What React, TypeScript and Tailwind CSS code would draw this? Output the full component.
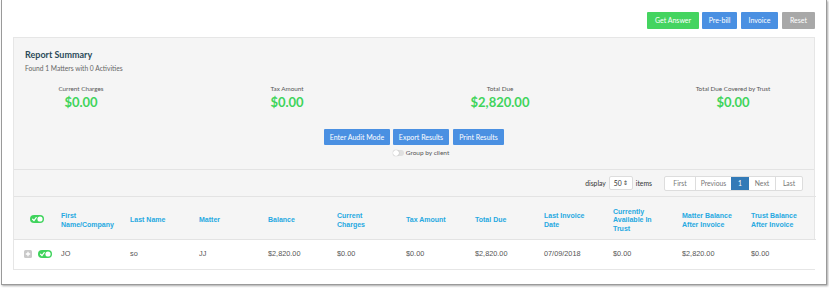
import React from 'react'

const lato = { fontFamily: 'Lato, "Liberation Sans", sans-serif' }

function Toggle() {
  return (
    <svg width="14" height="8" viewBox="0 0 14 8">
      <rect x="0" y="0" width="14" height="8" rx="4" fill="#3fd35c" />
      <path d="M2.6 4.2 L4 5.5 L6.2 2.6" stroke="#fff" strokeWidth="1.2" fill="none" strokeLinecap="round" />
      <circle cx="10" cy="4" r="2.6" fill="#fff" />
    </svg>
  )
}

function PlusBox() {
  return (
    <svg width="8" height="8" viewBox="0 0 8 8">
      <rect x="0" y="0" width="8" height="8" rx="1.5" fill="#c9c9c9" />
      <path d="M4 1.8 V6.2 M1.8 4 H6.2" stroke="#fff" strokeWidth="1.3" />
    </svg>
  )
}

const headerLines: string[][] = [
  ['First', 'Name/Company'],
  ['Last Name'],
  ['Matter'],
  ['Balance'],
  ['Current', 'Charges'],
  ['Tax Amount'],
  ['Total Due'],
  ['Last Invoice', 'Date'],
  ['Currently', 'Available In', 'Trust'],
  ['Matter Balance', 'After Invoice'],
  ['Trust Balance', 'After Invoice'],
]

const row = ['JO', 'so', 'JJ', '$2,820.00', '$0.00', '$0.00', '$2,820.00', '07/09/2018', '$0.00', '$2,820.00', '$0.00']

const summary = [
  { label: 'Current Charges', value: '$0.00', cls: 'w-[112px]' },
  { label: 'Tax Amount', value: '$0.00', cls: 'w-[300px]' },
  { label: 'Total Due', value: '$2,820.00', cls: 'w-[126px]' },
  { label: 'Total Due Covered by Trust', value: '$0.00', cls: 'w-[140px] ml-[100px]' },
]

export default function App() {
  return (
    <div className="w-[829px] h-[288px] bg-white overflow-hidden">
      <div className="ml-[1px] w-[826px] h-[285px] border-l border-r border-b border-[#9a9a9a] shadow-[1px_1px_2px_rgba(0,0,0,0.35)] bg-white px-[11px] pt-[12px]" style={lato}>
        <div className="flex justify-end gap-[3px]">
          <button className="w-[52px] h-[17px] bg-[#44d460] text-white text-[7px] rounded-[1px]">Get Answer</button>
          <button className="w-[35px] h-[17px] bg-[#4a90e2] text-white text-[7px] rounded-[1px]">Pre-bill</button>
          <button className="w-[37px] h-[17px] bg-[#4a90e2] text-white text-[7px] rounded-[1px] ml-[1px]">Invoice</button>
          <button className="w-[33px] h-[17px] bg-[#a8a8a8] text-white text-[7px] rounded-[1px] ml-[1px]">Reset</button>
        </div>

        <div className="mt-[8px] w-[802px] bg-[#f5f5f5] border border-[#e6e6e6]">
          <div className="px-[11px] pt-[10px]">
            <div className="text-[9px] leading-[14px] font-bold text-[#2b4a59]">Report Summary</div>
            <div className="text-[6.7px] leading-[10px] text-[#666] mt-[1px]">Found 1 Matters with 0 Activities</div>

            <div className="flex mt-[11px]">
              {summary.map((s) => (
                <div key={s.label} className={`${s.cls} text-center`}>
                  <div className="text-[6.3px] leading-[10px] text-[#555]">{s.label}</div>
                  <div className="text-[13px] leading-[17px] font-bold text-[#3fd45b]">{s.value}</div>
                </div>
              ))}
            </div>

            <div className="flex justify-center gap-[3px] mt-[18px]">
              <button className="w-[66px] h-[16px] bg-[#4a90e2] text-white text-[7px] rounded-[1px]">Enter Audit Mode</button>
              <button className="w-[56px] h-[16px] bg-[#4a90e2] text-white text-[7px] rounded-[1px]">Export Results</button>
              <button className="w-[51px] h-[16px] bg-[#4a90e2] text-white text-[7px] rounded-[1px] ml-[1px]">Print Results</button>
            </div>
            <div className="flex justify-center items-center gap-[2px] mt-[3px] h-[10px] pl-[14px]">
              <span className="w-[11px] h-[6px] rounded-full bg-[#e0e0e0] flex items-center">
                <span className="w-[6px] h-[6px] rounded-full bg-white shadow-[0_0_1px_rgba(0,0,0,0.4)]" />
              </span>
              <span className="text-[6.5px] text-[#555]">Group by client</span>
            </div>
            <div className="h-[11px]" />
          </div>

          <div className="border-t border-[#e3e3e3] h-[27px] flex items-center justify-end pr-[11px]">
            <span className="text-[6.8px] text-[#333]">display</span>
            <span className="ml-[3px] w-[24px] h-[14px] bg-white border border-[#ddd] rounded-[2px] flex items-center justify-between px-[4px] text-[6.8px] text-[#333]">
              50<span className="text-[6px] leading-none">⇕</span>
            </span>
            <span className="ml-[3px] text-[6.8px] text-[#333]">items</span>
            <div className="ml-[12px] flex h-[15px] text-[6.8px] text-[#777] bg-white border border-[#ddd] rounded-[2px]">
              <span className="w-[31px] flex items-center justify-center border-r border-[#ddd]">First</span>
              <span className="w-[35px] flex items-center justify-center">Previous</span>
              <span className="w-[18px] flex items-center justify-center bg-[#337ab7] text-white">1</span>
              <span className="w-[27px] flex items-center justify-center border-r border-[#ddd]">Next</span>
              <span className="w-[26px] flex items-center justify-center">Last</span>
            </div>
          </div>

          <table className="w-[800px] table-fixed border-collapse" style={{ fontFamily: '"Liberation Sans", Arial, sans-serif' }}>
            <colgroup>
              <col className="w-[43px]" />
              {headerLines.map((_, i) => (
                <col key={i} className="w-[69px]" />
              ))}
            </colgroup>
            <thead>
              <tr className="h-[43px] border-t border-[#e3e3e3]">
                <th className="align-middle pt-[2px]">
                  <div className="flex justify-center pl-[3px]">
                    <Toggle />
                  </div>
                </th>
                {headerLines.map((lines, i) => (
                  <th key={i} className="text-left align-middle pl-[4px] pt-[5px] text-[7px] leading-[8.5px] font-bold text-[#27a9e1]">
                    {lines.map((l) => (
                      <div key={l}>{l}</div>
                    ))}
                  </th>
                ))}
              </tr>
            </thead>
            <tbody>
              <tr className="h-[29px] bg-white border-t border-[#e3e3e3]">
                <td className="align-middle">
                  <div className="flex items-center pl-[10px] gap-[6px]">
                    <PlusBox />
                    <Toggle />
                  </div>
                </td>
                {row.map((v, i) => (
                  <td key={i} className="pl-[4px] text-[7.3px] text-[#555] align-middle">{v}</td>
                ))}
              </tr>
            </tbody>
          </table>
        </div>
      </div>
    </div>
  )
}
